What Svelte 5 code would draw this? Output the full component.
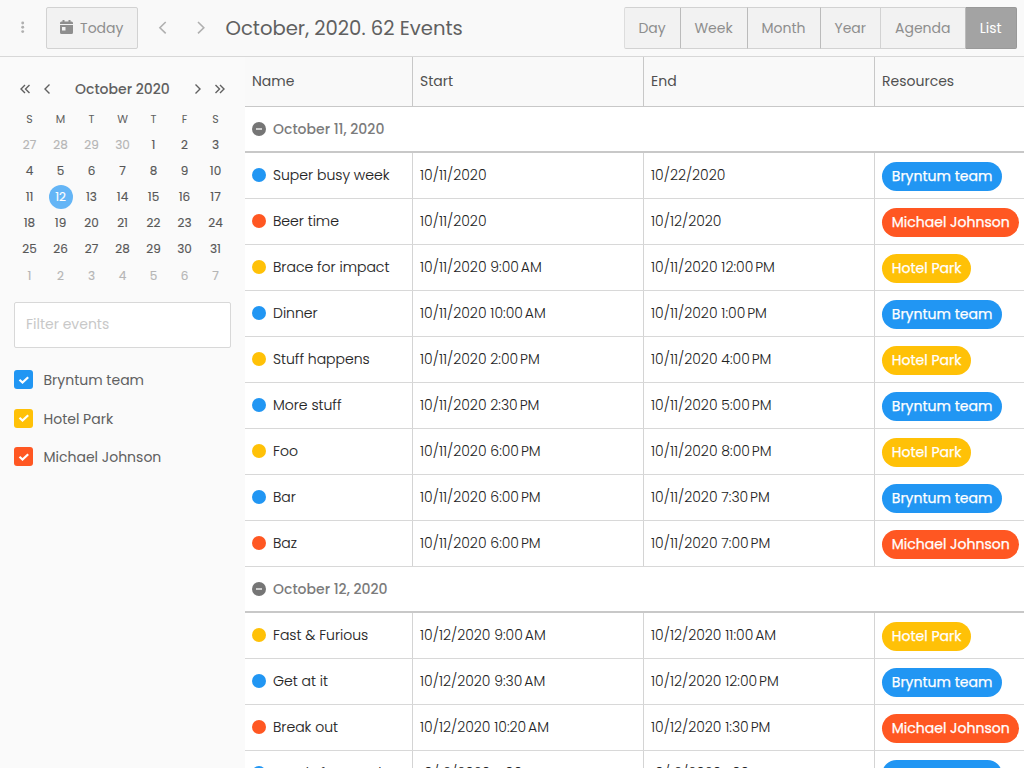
<script>
  const blue = '#2196f3', yellow = '#ffc107', red = '#ff5722';
  const teams = {
    b: { name: 'Bryntum team', color: blue },
    h: { name: 'Hotel Park', color: yellow },
    m: { name: 'Michael Johnson', color: red }
  };
  const views = [['Day', 57], ['Week', 67], ['Month', 73], ['Year', 60.5], ['Agenda', 84.5], ['List', 51.5]];
  const groups = [
    { title: 'October 11, 2020', rows: [
      ['b', 'Super busy week', '10/11/2020', '10/22/2020'],
      ['m', 'Beer time', '10/11/2020', '10/12/2020'],
      ['h', 'Brace for impact', '10/11/2020 9:00 AM', '10/11/2020 12:00 PM'],
      ['b', 'Dinner', '10/11/2020 10:00 AM', '10/11/2020 1:00 PM'],
      ['h', 'Stuff happens', '10/11/2020 2:00 PM', '10/11/2020 4:00 PM'],
      ['b', 'More stuff', '10/11/2020 2:30 PM', '10/11/2020 5:00 PM'],
      ['h', 'Foo', '10/11/2020 6:00 PM', '10/11/2020 8:00 PM'],
      ['b', 'Bar', '10/11/2020 6:00 PM', '10/11/2020 7:30 PM'],
      ['m', 'Baz', '10/11/2020 6:00 PM', '10/11/2020 7:00 PM']
    ] },
    { title: 'October 12, 2020', rows: [
      ['h', 'Fast & Furious', '10/12/2020 9:00 AM', '10/12/2020 11:00 AM'],
      ['b', 'Get at it', '10/12/2020 9:30 AM', '10/12/2020 12:00 PM'],
      ['m', 'Break out', '10/12/2020 10:20 AM', '10/12/2020 1:30 PM'],
      ['b', 'Ready for coach', '10/12/2020 11:00 AM', '10/12/2020 1:00 PM']
    ] }
  ];
  const days = Array.from({ length: 42 }, (_, i) => {
    const n = i - 3;
    return { n: n < 1 ? n + 30 : n > 31 ? n - 31 : n, other: n < 1 || n > 31, today: n === 12 };
  });
  // The meridiem is joined to the time by a narrow no-break space.
  const stamp = (s) => s.replace(/ (AM|PM)$/, '\u202f$1');
</script>

{#snippet chevron(kind)}
  <svg class="chev" viewBox="0 0 12 14" width="12" height="14">
    {#if kind === 'prev'}<path d="M7.5 2.5 3 7l4.5 4.5" />
    {:else if kind === 'next'}<path d="M3.5 2.5 8 7l-4.5 4.5" />
    {:else if kind === 'first'}<path d="M6 3 2 7l4 4M10.500 3 6.500 7l4 4" />
    {:else}<path d="m1.500 3 4 4-4 4M6 3l4 4-4 4" />{/if}
  </svg>
{/snippet}

<div class="app">
  <header>
    <svg class="dots" width="4" height="14" viewBox="0 0 4 14"><circle cx="1.700" cy="2" r="1.450" /><circle cx="1.700" cy="6.300" r="1.450" /><circle cx="1.700" cy="10.600" r="1.450" /></svg>
    <button class="today">
      <svg width="13" height="15" viewBox="0 0 13 15"><path fill-rule="evenodd" d="M0 4V3q0-1.500 1.500-1.500h1V0h2v1.500h4V0h2v1.500h1Q13 1.500 13 3v1zM0 5h13v7.500q0 1.500-1.500 1.500h-10Q0 14 0 12.500zM2 7v3.500h3.500V7z" /></svg>
      <span>Today</span>
    </button>
    <svg class="nav" width="9" height="14" viewBox="0 0 9 14"><path d="M7.700 1 1.900 6.700l5.800 5.700" /></svg>
    <svg class="nav second" width="9" height="14" viewBox="0 0 9 14"><path d="M1 1l5.800 5.700L1 12.400" /></svg>
    <h1>October, 2020. 62 Events</h1>
    <div class="views">
      {#each views as [v, w]}
        <button class:active={v === 'List'} style:width="{w}px">{v}</button>
      {/each}
    </div>
  </header>
  <main>
    <aside>
      <div class="month">
        {@render chevron('first')}{@render chevron('prev')}
        <b>October 2020</b>
        {@render chevron('next')}{@render chevron('last')}
      </div>
      <div class="week">{#each 'SMTWTFS'.split('') as d}<span>{d}</span>{/each}</div>
      <div class="days">
        {#each days as d}<span class:other={d.other} class:now={d.today}><i>{d.n}</i></span>{/each}
      </div>
      <input placeholder="Filter events" />
      {#each Object.values(teams) as t}
        <div class="check">
          <span class="box" style:background={t.color}><svg width="12" height="10" viewBox="0 0 12 10"><path d="m1.500 4.800 3 2.800 5.700-5.400" /></svg></span>
          <span class="name">{t.name}</span>
        </div>
      {/each}
    </aside>
    <section>
      <div class="row head">
        <div>Name</div><div>Start</div><div>End</div><div>Resources</div>
      </div>
      {#each groups as g}
        <div class="group">
          <svg width="14" height="14" viewBox="0 0 14 14"><circle cx="7" cy="7" r="7" /><path d="M4 7h6" /></svg>
          <span>{g.title}</span>
        </div>
        {#each g.rows as [id, name, start, end]}
          <div class="row">
            <div><i class="dot" style:background={teams[id].color}></i><span>{name}</span></div>
            <div>{stamp(start)}</div>
            <div>{stamp(end)}</div>
            <div class="res"><span class="pill" style:background={teams[id].color}>{teams[id].name}</span></div>
          </div>
        {/each}
      {/each}
    </section>
  </main>
</div>

<style>
  :global(body) { margin: 0; overflow: hidden; }
  .app { width: 1024px; height: 768px; overflow: hidden; display: flex; flex-direction: column; background: #fafafa; color: #606060; font: 400 14px/20px Poppins, Inter, sans-serif; }
  .app * { box-sizing: border-box; }
  span { white-space: nowrap; }
  header { height: 57px; flex: none; display: flex; align-items: center; border-bottom: 1px solid #d8d8d8; padding: 0 7px 0 21px; background: #f9f9f9; }
  button { font: inherit; color: #8e8e8e; background: #f2f2f2; border: 1px solid #d2d2d2; height: 42px; padding: 0 0 1px; display: flex; align-items: center; justify-content: center; }
  .dots { fill: #b0b0b0; }
  .today { margin-left: 20.500px; width: 92.500px; border-radius: 2px; gap: 7px; fill: #8e8e8e; }
  .nav { margin-left: 20px; fill: none; stroke: #b0b0b0; stroke-width: 1.600; }
  .second { margin-left: 30px; }
  h1 { font-weight: 400; font-size: 19.600px; line-height: 28px; margin: 0 auto 0 19.500px; }
  .views { display: flex; }
  .views button { border-left-width: 0; border-right-color: #bbb; }
  .views button:first-child { border-left: 1px solid #ddd; border-radius: 2px 0 0 2px; }
  .views button:nth-child(4) { border-right-color: #d2d2d2; }
  .views button.active { background: #a3a3a3; color: #fff; border-color: #999; border-radius: 0 2px 2px 0; }
  main { flex: 1; display: flex; min-height: 0; }
  aside { width: 245px; flex: none; padding: 18px 14px 0; }
  .month { height: 28px; display: flex; align-items: center; padding: 0 5px; }
  .month b { font-weight: 500; width: 95px; margin: 0 22px 0 21px; white-space: nowrap; padding-bottom: 1px; }
  .chev { fill: none; stroke: #606060; stroke-width: 1.400; flex: none; }
  .chev:nth-child(2) { margin-left: 11px; }
  .chev:last-child { margin-left: 10.500px; }
  .week, .days { display: grid; grid-template-columns: repeat(7, 31px); text-align: center; }
  .week { font-size: 11px; line-height: 20px; margin: 6px 0 3px; }
  .days { grid-auto-rows: 26.100px; font-size: 12px; -webkit-text-stroke: .15px; }
  .days span { display: flex; align-items: center; justify-content: center; }
  .days i { font-style: normal; width: 24px; height: 24px; line-height: 24px; border-radius: 50%; }
  .days span:not(.other) { color: #575757; }
  .days .other { color: #b5b5b5; }
  .days .now i { background: #64b5f6; color: #fff; }
  input { display: block; width: 217px; height: 46px; border: 1px solid #d8d8d8; border-radius: 2px; background: #fff; padding: 0 11px 1px; margin: 13px 0 13px; font: inherit; outline: 0; }
  input::placeholder { color: #c8c8c8; opacity: 1; }
  .check { display: flex; align-items: center; height: 38.500px; gap: 10.500px; }
  .box { width: 19px; height: 19px; border-radius: 3px; display: flex; align-items: center; justify-content: center; }
  .box path { fill: none; stroke: #fff; stroke-width: 2.200; }
  .name { padding-top: 1px; }
  section { flex: 1; min-width: 0; background: #fff; overflow: hidden; }
  .row { display: grid; grid-template-columns: 168px 231px 231px 149px; height: 46px; border-bottom: 1px solid #d8d8d8; color: #222; font-weight: 300; }
  .row > div { border-right: 1px solid #d4d4d4; padding: 0 7px 2px; display: flex; align-items: center; }
  .row > div:last-child { border-right: 0; }
  .row .dot + span { -webkit-text-stroke: .1px; }
  .head { height: 50px; background: #f9f9f9; border-color: #c8c8c8; color: #505050; font-weight: 400; }
  .head > div { border-color: #c8c8c8; }
  .group { height: 46px; border-bottom: 2px solid #c8c8c8; padding-left: 7px; display: flex; align-items: center; gap: 7px; color: #7b7b7b; font-weight: 500; }
  .group span { padding-bottom: 1px; }
  .group circle { fill: #757575; }
  .group path { stroke: #fff; stroke-width: 1.300; }
  .dot { width: 14px; height: 14px; border-radius: 50%; margin-right: 7px; flex: none; }
  .row > .res { padding-bottom: 0; }
  .pill { height: 29px; border-radius: 15px; color: #fff; font-weight: 400; line-height: 28px; padding: 0 9.800px; flex: none; margin-top: 2px; -webkit-text-stroke: .25px #fff; }
</style>
